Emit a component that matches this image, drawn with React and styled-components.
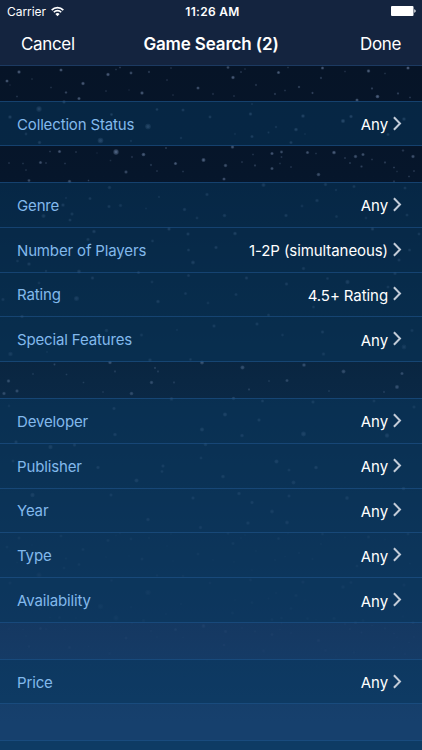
import React from 'react'
import styled, { createGlobalStyle } from 'styled-components';

const groups = [
    [
        { label: 'Collection Status', value: 'Any' },
    ],
    [
        { label: 'Genre', value: 'Any' },
        { label: 'Number of Players', value: '1-2P (simultaneous)' },
        { label: 'Rating', value: '4.5+ Rating' },
        { label: 'Special Features', value: 'Any' },
    ],
    [
        { label: 'Developer', value: 'Any' },
        { label: 'Publisher', value: 'Any' },
        { label: 'Year', value: 'Any' },
        { label: 'Type', value: 'Any' },
        { label: 'Availability', value: 'Any' },
    ],
    [
        { label: 'Price', value: 'Any' },
    ],
];

// x, y, radius, opacity inside one 422x466 tile of sky
const stars = [
    [19, 6, 1.5, .5], [61, 4, 1.4, .5], [7, 15, 1.4, .5], [83, 17.5, 1.5, .5], [108, 8.5, 1.5, .5],
    [131, 7, 1.3, .45], [149, 6, 1, .3], [120, 1.5, .9, .3], [116, 3.5, .8, .25], [171, 2, .8, .25],
    [32, 13, .8, .2], [10, 19, .7, .2], [51, 21.5, .8, .25], [66, 26.5, 1.1, .4], [79, 32.5, 1.4, .5],
    [106, 25, .8, .25], [129, 24, .7, .2], [142, 27, 1.5, .5], [167, 14, .8, .25], [198, 22, 1.4, .45],
    [173, 29, .8, .2], [17, 30.5, .8, .3], [228, 1.5, 1.3, .4], [233, 11.5, 1.5, .5], [241, 6, .9, .3],
    [245, 3, .8, .2], [278.5, 6.5, 1.4, .5], [288, 1.5, .8, .25], [322.5, 2, 1.4, .45], [345, 5.5, .9, .2],
    [321, 12, 1, .3], [368.5, 5, 1.5, .5], [408, 2, 1.4, .55], [385, 7.5, .8, .25], [256, 19, 1, .25],
    [299, 21, 1.1, .35], [285, 24.5, .9, .25], [312.5, 27, 1, .35], [275, 28, 1, .3], [372, 22.5, 1, .35],
    [377.5, 30.5, 1.6, .6], [398, 27.5, 1, .35], [410, 31.5, .9, .3], [234, 30, .9, .25], [213, 28, 1, .2],
    [39, 43, 2.3, .45], [64, 36, 1.5, .4], [10, 51, 1.6, .4], [111.5, 48.5, 1.3, .4], [148, 60.5, 2.4, .5],
    [157, 43.5, 1.2, .4], [183, 44, 1.4, .35], [100.5, 74.5, 2.4, .55], [39.5, 76.5, 1.5, .4], [26, 68, 1.2, .35],
    [181, 72, 1.1, .3], [131, 75, 1, .3], [210, 51, 1.3, .4],
    [250.5, 48, 1.5, .4], [303, 50, 1.6, .45], [343, 55, 1.8, .5], [351, 50.5, 1.5, .45], [357, 34, 1.4, .5],
    [404, 53, 1.6, .4], [388, 68.5, 1.4, .35], [296, 63.5, 1.6, .45], [252, 70.5, 1.4, .4], [291, 76.5, 1.4, .4],
    [276, 61, 1.1, .3], [268.5, 66.5, 1, .3], [235, 68, 1, .2], [305, 68, .8, .25], [252, 38, .9, .3],
    [59.5, 85.5, 1.4, .55], [116, 86, 2.3, .65], [143.5, 88.5, 1.6, .6], [40.5, 96.5, 1.4, .5], [46, 97, .8, .35],
    [50, 85.5, .8, .35], [76, 86, .9, .3], [97, 87, .7, .2], [132, 91, 1, .25], [23, 97.5, .8, .3],
    [9, 97, .9, .3], [65, 97.5, .9, .3], [26, 104, .8, .3], [110.5, 94.5, .9, .2], [126, 106, 1.5, .45],
    [151, 99, 1, .3], [175.5, 97.5, 1.4, .6], [203.5, 94, 1.7, .65], [157, 105, .9, .3], [183, 105.5, .9, .3],
    [166, 82, .9, .4], [29, 114.5, 1.3, .5], [69.5, 115.5, 1.5, .5], [88.5, 114.5, .8, .4],
    [232.5, 81, 1.5, .5], [272, 87.5, 1.4, .55], [281.5, 86, 1.3, .5], [281.5, 91, .9, .3], [307.5, 86.5, 1.4, .5],
    [334, 86.5, 1.6, .6], [316, 87.5, .8, .3], [355.5, 90.5, 1.5, .5], [363, 88.5, 1.4, .5], [372, 93.5, .9, .3],
    [345, 92, .8, .4], [350, 97, .9, .4], [361.5, 100.5, 1.1, .35], [253, 88.5, .8, .3], [242, 96, .9, .3],
    [225.5, 99.5, 1.5, .5], [255, 99.5, 1, .35], [272, 102.5, 1.4, .5], [280, 97.5, .8, .3], [291, 101, .9, .3],
    [318.5, 108.5, 1.6, .5], [224, 113, 1.4, .55], [385, 96.5, 1, .35], [413, 90.5, 1.5, .5], [403, 84.5, 1.1, .3],
    [394, 101.5, .9, .4], [397, 105.5, .8, .25], [414, 105, .9, .35], [409, 110.5, .8, .4], [394, 115.5, 1, .3],
    [109.5, 121.5, 1.6, .35], [90, 132.5, 1.4, .35], [66, 132, 1.1, .25], [109, 140.5, 1.5, .35], [120.5, 139.5, 1.5, .3],
    [63, 139, 1.6, .4], [72, 148, 1.5, .35], [43.5, 150, 1.8, .4], [184.5, 143.5, 1.5, .4], [159, 131, 1, .3],
    [207, 128.5, 1.5, .35], [197, 152, 1.3, .35], [146, 142.5, .9, .25], [263.5, 119, 1.8, .35], [325.5, 118.5, 1.5, .35],
    [354, 120.5, 1.4, .35], [336, 124, 1.1, .3], [405, 122, 1.4, .35], [317, 134.5, 1.6, .35], [302, 140, 1.3, .3],
    [224.5, 149.5, 1.6, .4], [286, 149.5, 1.5, .4], [336.5, 150.5, 1.4, .3], [407, 149, 1.4, .35], [366, 152, 1.2, .3],
    [94, 165.5, 1.6, .45], [88, 173.5, 1.5, .4], [70, 154, 1.4, .4], [169, 163, 1.5, .5], [188, 168, 1.5, .45],
    [152.5, 175, 1.3, .4], [188.5, 184, 1.4, .4], [193, 196.5, 1.7, .5], [29, 198, 1.6, .45], [17.5, 195, 1.3, .35],
    [122, 190, 1.3, .4], [79, 205.5, 1.7, .5], [46, 205, 1.1, .4], [138.5, 206.5, 1.4, .45],
    [235, 167.5, 1.6, .5], [216, 181.5, 1.5, .45], [372.5, 163, 1.5, .45], [409.5, 184, 1.4, .4], [399, 194, 1.5, .4],
    [419, 168, 1.3, .4], [303.5, 202.5, 1.5, .4], [315, 183, 1.1, .3],
    [92.5, 212, 1.5, .45], [39, 217, 1.3, .35], [76.5, 232.5, 2.2, .5], [3, 233.5, 1.5, .4], [158, 235.5, 1.6, .5],
    [185.5, 227.5, 1.4, .4], [188.5, 209.5, 1.4, .4], [152, 216, 1.3, .35], [208, 237, 1.3, .35], [22, 250.5, 1.5, .5],
    [246.5, 212, 1.5, .45], [286.5, 218, 1.5, .45], [347.5, 216, 1.9, .5], [388, 221, 1.4, .4], [327.5, 212.5, 1.3, .4],
    [236, 228.5, 1.4, .4], [399, 228, 1.5, .45], [313.5, 241, 1.4, .4], [268.5, 249, 1.4, .4], [395, 207.5, 1.5, .4],
    [106.5, 264.5, 1.6, .5], [141.5, 269, 1.5, .4], [10.5, 288, 2, .5], [150, 294, 1.6, .5], [47, 286, 1, .3],
    [177, 264, 1, .3], [63, 276, 1.1, .3], [214, 260, 1.5, .5], [257, 258, 1.5, .5], [322.5, 266, 1.5, .5],
    [282.5, 269, 1.3, .4], [323.5, 288, 1.6, .45], [404, 281, 2.1, .5], [412, 264.5, 1.5, .4],
    [110, 296.5, 1.5, .8], [202, 296.5, 1.7, .8], [190.5, 293.5, 1.2, .5], [54.5, 298.5, 1, .5], [155, 302, 1, .5],
    [115, 305.5, 1, .4], [158, 305.5, 1, .4], [33, 308, 1, .3], [66.5, 308.5, .9, .4], [8.5, 315, 1.5, .7],
    [83.5, 316.5, .9, .4], [151.5, 316.5, 1.5, .7], [174, 316.5, 1, .4], [17, 325, 1.5, .7], [4, 327.5, 1.5, .7],
    [131.5, 327.5, 1.6, .7], [103, 326, .8, .4], [242.5, 301.5, 1.8, .7], [304, 299, 1.6, .7], [343.5, 305.5, 1.7, .7],
    [402, 307.5, 1.4, .7], [287, 314.5, 1.4, .6], [397, 321, 1.8, .7], [269, 315, .9, .4], [249, 323.5, 1, .5],
    [329, 325, .9, .4], [384, 326, 1, .4], [171.5, 333, 1.6, .6], [9, 340, 1.2, .4], [114, 342.5, 1.5, .6],
    [233.5, 332.5, 1.5, .6], [262.5, 335, 1.4, .6], [313, 336, 1.5, .6], [374, 335, 1.4, .5], [414, 341, 1.5, .5],
    [115, 368.5, 1.6, .7], [202, 363.5, 1.8, .8], [16, 376, 1.5, .8],
    [50.5, 381, 1.9, .8], [74.5, 379, 1.5, .7], [205.5, 378.5, 1.6, .7], [225, 348.5, 1.8, .8], [259, 354, 1.5, .7],
    [303.5, 368, 2.1, .9], [242, 369.5, 1.6, .7], [387, 369.5, 1.9, .8],
    [98, 401.5, 1.5, .8], [163, 400, 1.5, .7], [162, 405.5, 1.3, .7], [136.5, 414.5, 1.8, .9], [13, 395, 1.4, .6],
    [201, 392, 1.3, .6], [32.5, 429, 1.9, .9], [111, 429, 1.5, .7], [193, 432, 1.5, .8], [148, 453.5, 1.6, .8],
    [200.5, 461.5, 1.5, .7], [276.5, 395.5, 1.8, .9], [316, 401.5, 1.6, .9], [289, 404, 1.4, .6], [223, 410.5, 1.6, .8],
    [293.5, 416.5, 1.7, .8], [403.5, 422.5, 1.6, .8], [239, 427.5, 1.6, .8], [289, 430, 1.5, .7], [347, 432, 1.7, .8],
    [252, 436.5, 1.5, .8], [272, 445.5, 1.7, .8], [248, 457, 1.6, .8], [287, 456.5, 1.7, .8],
];

const Sky = () => (
    <SkyLayer viewBox="0 0 422 684">
        <defs>
            <pattern id="sky" width="422" height="466" patternUnits="userSpaceOnUse">
                {stars.map(([x, y, r, opacity], i) => (
                    <g key={i} fill="#8ba2c8">
                        <circle cx={x} cy={y} r={r * 1.15} opacity={opacity * 0.6} />
                        <circle cx={x} cy={y} r={r * 0.65} opacity={opacity * 0.7} />
                    </g>
                ))}
            </pattern>
            <linearGradient id="fade" x1="0" y1="0" x2="0" y2="1">
                <stop offset="0" stopColor="#fff" stopOpacity=".9" />
                <stop offset=".4" stopColor="#fff" stopOpacity=".5" />
                <stop offset=".75" stopColor="#fff" stopOpacity=".22" />
                <stop offset=".9" stopColor="#fff" stopOpacity="0" />
            </linearGradient>
            <mask id="skyMask">
                <rect width="422" height="684" fill="url(#fade)" />
            </mask>
        </defs>
        <rect width="422" height="684" fill="url(#sky)" mask="url(#skyMask)" />
    </SkyLayer>
)

const StatusBar = () => (
    <Status>
        <Carrier>
            Carrier
            <svg width="13" height="11" viewBox="0 0 13 11">
                <path d="M0.7 4.1C3.9 0.7 9.1 0.7 12.3 4.1" fill="none" stroke="#fff" strokeWidth="1.7" />
                <path d="M2.8 6.3C4.8 4.1 8.2 4.1 10.2 6.3" fill="none" stroke="#fff" strokeWidth="1.6" />
                <path d="M4.4 8C5.6 6.8 7.4 6.8 8.6 8L6.5 10.3Z" fill="#fff" />
            </svg>
        </Carrier>
        <Clock>11:26 AM</Clock>
        <Battery viewBox="0 0 25 10">
            <rect width="22.5" height="10" rx="1" fill="#fff" />
            <path d="M23.3 3.2C25.1 3.6 25.1 6.4 23.3 6.8Z" fill="#fff" />
        </Battery>
    </Status>
)

const FilterRow = ({ label, value }) => (
    <Row>
        <Label>{label}</Label>
        <Value>{value}</Value>
        <Chevron viewBox="0 0 9 15">
            <path d="M0.9 1.2L7 7.5L0.9 13.8" />
        </Chevron>
    </Row>
)

const App = () => {
    return (
        <Screen>
            <GlobalStyle />
            <Header>
                <StatusBar />
                <NavBar>
                    <NavButton>Cancel</NavButton>
                    <Title>Game Search (2)</Title>
                    <NavButton $end>Done</NavButton>
                </NavBar>
            </Header>
            <Content>
                <Sky />
                {groups.map((rows, i) => (
                    <Group key={i} $rows={rows.length}>
                        {rows.map((row) => (
                            <FilterRow key={row.label} label={row.label} value={row.value} />
                        ))}
                    </Group>
                ))}
                <Group $rows={1}>
                    <Row />
                </Group>
            </Content>
        </Screen>
    )
}

export default App

const GlobalStyle = createGlobalStyle`
    * {
        box-sizing: border-box;
    }

    body {
        margin: 0;
        background: #061529;
        font-family: Inter, "Liberation Sans", sans-serif;
    }
`

const Screen = styled.div`
    width: 422px;
    height: 750px;
    display: flex;
    flex-direction: column;
    overflow: hidden;
    color: #fff;
`

const Header = styled.header`
    height: 66px;
    flex-shrink: 0;
    display: flex;
    flex-direction: column;
    background: #14243f;
    border-bottom: 1px solid #1c3a61;
`

const Status = styled.div`
    height: 21px;
    display: grid;
    grid-template-columns: 1fr auto 1fr;
    align-items: center;
    padding: 1px 6px 0 7px;
    font-size: 12px;
`

const Carrier = styled.div`
    display: flex;
    align-items: center;
    gap: 5px;
    letter-spacing: -0.05px;
`

const Clock = styled.div`
    padding-left: 2px;
    font-weight: 600;
    letter-spacing: 0.3px;
`

const Battery = styled.svg`
    width: 25px;
    height: 10px;
    justify-self: end;
`

const NavBar = styled.nav`
    flex: 1;
    display: grid;
    grid-template-columns: 1fr auto 1fr;
    align-items: center;
    padding: 1px 21px 0;
`

const NavButton = styled.button`
    justify-self: ${({ $end }) => ($end ? 'end' : 'start')};
    padding: 0;
    border: none;
    background: none;
    color: #fff;
    font-family: inherit;
    font-size: 17px;
    letter-spacing: -0.35px;
    cursor: pointer;
`

const Title = styled.h1`
    margin: 0;
    font-size: 17px;
    font-weight: 600;
    letter-spacing: -0.15px;
`

const Content = styled.main`
    flex: 1;
    position: relative;
    display: flex;
    flex-direction: column;
    gap: 36px;
    padding-top: 35px;
    overflow: hidden;
    background: linear-gradient(#061427 0, #06162b 110px, #0a2743 315px, #153963 570px, #16406d 655px);
`

const SkyLayer = styled.svg`
    position: absolute;
    top: 0;
    left: 0;
    width: 422px;
    height: 684px;
`

const Group = styled.section`
    position: relative;
    flex-shrink: 0;
    height: ${({ $rows }) => $rows * 45}px;
    display: flex;
    flex-direction: column;
    background: rgba(8, 55, 92, 0.53);
    border-bottom: 1px solid rgba(36, 92, 152, 0.5);
`

const Row = styled.div`
    flex: 1;
    display: flex;
    align-items: center;
    padding: 0 20px 0 17px;
    border-top: 1px solid rgba(36, 92, 152, 0.5);
`

const Label = styled.span`
    flex: 1;
    padding-top: 1px;
    color: #82b9ec;
    font-size: 15px;
    letter-spacing: -0.15px;
`

const Value = styled.span`
    padding-top: 2px;
    font-size: 15px;
    letter-spacing: -0.08px;
`

const Chevron = styled.svg`
    width: 9px;
    height: 15px;
    margin: 0 0 1px 5px;
    fill: none;
    stroke: #c3ccd8;
    stroke-width: 2;
`
